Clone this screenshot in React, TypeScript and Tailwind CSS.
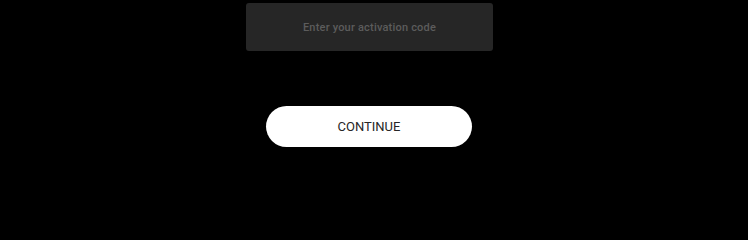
export default function App() {
  return (
    <div
      className="flex min-h-screen w-full flex-col items-center bg-black pr-[9px] pt-[3px]"
      style={{ fontFamily: 'Roboto, "Liberation Sans", sans-serif' }}
    >
      <input
        type="text"
        placeholder="Enter your activation code"
        className="h-[48px] w-[247px] rounded-[3px] bg-[#262626] pt-px text-center text-[11px] font-medium tracking-[0.2px] text-white outline-none placeholder:text-[#5c5c5c]"
      />
      <button
        type="button"
        className="mt-[55px] mr-[1px] h-[41px] w-[206px] rounded-full bg-white text-[13px] text-[#262626]"
      >
        CONTINUE
      </button>
    </div>
  );
}
